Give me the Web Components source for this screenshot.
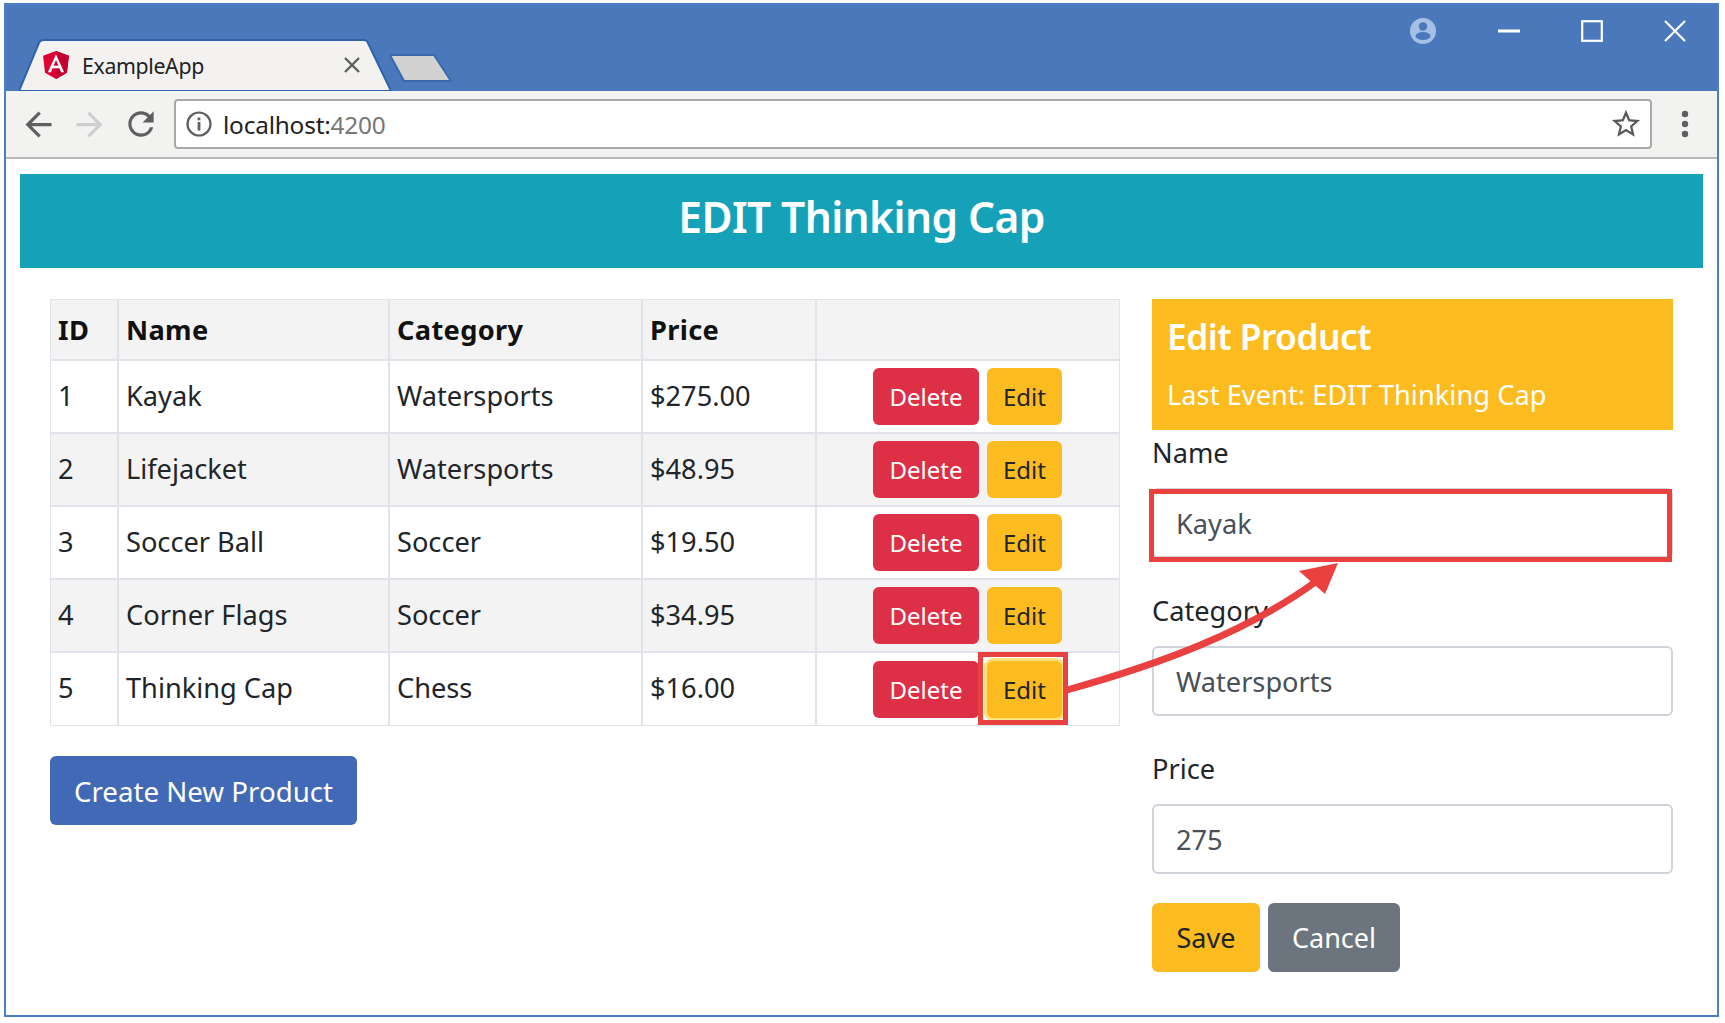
<!DOCTYPE html>
<html>
<head>
<meta charset="utf-8">
<title>ExampleApp</title>
<style>
    html, body { margin: 0; padding: 0; background: #fff; }
    body { padding: 3px 0 0 4px; font-family: "Noto Sans", "Open Sans", sans-serif; }
</style>
</head>
<body>
<x-window>
    <x-titlebar slot="chrome"></x-titlebar>
    <x-toolbar slot="chrome"></x-toolbar>
    <x-banner>EDIT Thinking Cap</x-banner>
    <x-product-table slot="left"></x-product-table>
    <x-btn slot="left" kind="primary" size="lg" class="create">Create New Product</x-btn>
    <x-edit-panel slot="right"></x-edit-panel>
    <x-annotations slot="over"></x-annotations>
</x-window>

<script>
class Base extends HTMLElement {
    $style() { return ''; }
    $template() { return ''; }
    constructor() {
        super();
        this.$dom = this.attachShadow({mode: 'open'});
    }
    connectedCallback() {
        this.$dom.innerHTML = '<style>' + this.$style() + '</style>' + this.$template();
    }
}

class XWindow extends Base {
    $style() {
        return `
        :host { display: block; position: relative; width: 1711px; height: 1010px;
            border: 2px solid #4a7fc4; background: #fff; overflow: hidden; color: #212529; }
        .content { padding: 15px 14px 0 14px; }
        .cols { display: grid; grid-template-columns: 1070px 521px; column-gap: 32px;
            margin: 31px 0 0 30px; }
        .left { display: flex; flex-direction: column; align-items: flex-start; gap: 30px; }
        `;
    }
    $template() {
        return `
        <slot name="chrome"></slot>
        <div class="content">
            <slot></slot>
            <div class="cols">
                <div class="left"><slot name="left"></slot></div>
                <div><slot name="right"></slot></div>
            </div>
        </div>
        <slot name="over"></slot>`;
    }
}

class XTitlebar extends Base {
    $style() {
        return `
        :host { display: flex; justify-content: space-between; height: 86px; background: #4a78bb; }
        .tabs { display: flex; align-items: flex-end; padding-left: 13px; }
        .tab { position: relative; width: 372px; height: 52px; display: flex; align-items: center;
            font-size: 21.3px; color: #222; }
        .tab > svg.shape { position: absolute; left: 0; top: 0; }
        .tab > * { position: relative; }
        .fav { margin-left: 22px; }
        .tab span { margin-left: 11px; flex: 1; letter-spacing: -0.35px; }
        .x { margin-right: 30px; }
        .newtab { margin: 0 0 8px -3px; display: block; }
        .ctl { display: flex; height: 52px; margin-right: 1px; }
        .ctl div { width: 83px; display: flex; align-items: center; justify-content: center; }
        .ctl div:first-child { margin-right: 3px; }
        `;
    }
    $template() {
        return `
        <div class="tabs">
            <div class="tab">
                <svg class="shape" width="372" height="52" viewBox="0 0 372 52">
                    <path d="M0 52 L20 4 Q21 1 25 1 H345 Q348 1 349 4 L372 52 Z" fill="#f3f2f1" stroke="#2f62ad" stroke-width="2"/>
                </svg>
                <svg class="fav" width="30" height="30" viewBox="22 22 206 216">
                    <polygon points="125,30 31.9,63.2 46.1,186.3 125,230 203.9,186.3 218.1,63.2" fill="#DD0031"/>
                    <polygon points="125,30 125,230 203.9,186.3 218.1,63.2" fill="#C3002F"/>
                    <path fill="#fff" d="M125,52.1L66.8,182.6h21.7l11.7-29.2h49.4l11.7,29.2h21.7L125,52.1z M142,135.4H108l17-40.9L142,135.4z"/>
                </svg>
                <span>ExampleApp</span>
                <svg class="x" width="18" height="18" viewBox="0 0 18 18"><path d="M2 2 L16 16 M16 2 L2 16" stroke="#5f5f5f" stroke-width="2.4"/></svg>
            </div>
            <svg class="newtab" width="66" height="30" viewBox="0 0 66 30">
                <path d="M2 2 H46 L63 28 H16 Z" fill="#d2d2d2" stroke="#3a69b0" stroke-width="2" stroke-linejoin="round"/>
            </svg>
        </div>
        <div class="ctl">
            <div><svg width="28" height="28" viewBox="0 0 28 28">
                <circle cx="14" cy="14" r="13" fill="#a6c0e5"/>
                <circle cx="14" cy="9.5" r="4.2" fill="#4a78bb"/>
                <ellipse cx="14" cy="19" rx="7.5" ry="4" fill="#4a78bb"/>
            </svg></div>
            <div><svg width="22" height="4" viewBox="0 0 22 4"><rect width="22" height="3" y="0.5" fill="#fff"/></svg></div>
            <div><svg width="22" height="22" viewBox="0 0 22 22"><rect x="1.2" y="1.2" width="19.6" height="19.6" fill="none" stroke="#fff" stroke-width="2.2"/></svg></div>
            <div><svg width="22" height="22" viewBox="0 0 22 22"><path d="M1 1 L21 21 M21 1 L1 21" stroke="#fff" stroke-width="2.2"/></svg></div>
        </div>`;
    }
}

class XToolbar extends Base {
    $style() {
        return `
        :host { display: flex; align-items: center; height: 66px; padding-left: 7px; background: #f2f2f1;
            border-bottom: 2px solid #b9b9b9; box-sizing: content-box; }
        .nav { width: 51px; display: flex; justify-content: center; }
        .omni { flex: 1; height: 46px; margin-left: 8px; display: flex; align-items: center; background: #fff;
            border: 2px solid #a8a8a8; border-radius: 4px; font-size: 24.4px; }
        .omni .i { margin-left: 10px; }
        .omni .url { margin-left: 11px; flex: 1; color: #222; letter-spacing: -0.2px; }
        .omni .url span { color: #777; }
        .omni .star { margin-right: 7px; }
        .menu { width: 65px; display: flex; justify-content: center; }
        `;
    }
    $template() {
        return `
        <div class="nav"><svg width="39" height="39" viewBox="0 0 24 24" fill="#5f5f5f"><path d="M20 11H7.83l5.59-5.59L12 4l-8 8 8 8 1.41-1.41L7.83 13H20v-2z"/></svg></div>
        <div class="nav"><svg width="39" height="39" viewBox="0 0 24 24" fill="#cfcfcf"><path d="M4 11h12.17l-5.59-5.59L12 4l8 8-8 8-1.41-1.41L16.17 13H4v-2z"/></svg></div>
        <div class="nav"><svg width="38" height="38" viewBox="0 0 24 24" fill="#5f5f5f"><path d="M17.65 6.35A7.958 7.958 0 0 0 12 4c-4.42 0-7.99 3.58-7.99 8s3.57 8 7.99 8c3.73 0 6.84-2.55 7.73-6h-2.08A5.99 5.99 0 0 1 12 18c-3.31 0-6-2.69-6-6s2.69-6 6-6c1.66 0 3.14.69 4.22 1.78L13 11h7V4l-2.35 2.35z"/></svg></div>
        <div class="omni">
            <svg class="i" width="26" height="26" viewBox="0 0 26 26">
                <circle cx="13" cy="13" r="11.5" fill="none" stroke="#5f5f5f" stroke-width="2.2"/>
                <rect x="11.6" y="11" width="2.8" height="8.5" fill="#5f5f5f"/>
                <rect x="11.6" y="6.5" width="2.8" height="2.8" fill="#5f5f5f"/>
            </svg>
            <div class="url">localhost:<span>4200</span></div>
            <svg class="star" width="34" height="34" viewBox="0 0 24 24" fill="#5a5a5a"><path d="M22 9.24l-7.19-.62L12 2 9.19 8.63 2 9.24l5.46 4.73L5.82 21 12 17.27 18.18 21l-1.63-7.03L22 9.24zM12 15.4l-3.76 2.27 1-4.28-3.32-2.88 4.38-.38L12 6.1l1.71 4.04 4.38.38-3.32 2.88 1 4.28L12 15.4z"/></svg>
        </div>
        <div class="menu"><svg width="8" height="28" viewBox="0 0 8 28" fill="#5f5f5f">
            <circle cx="4" cy="4" r="3.2"/><circle cx="4" cy="14" r="3.2"/><circle cx="4" cy="24" r="3.2"/>
        </svg></div>`;
    }
}

class XBanner extends Base {
    $style() {
        return `
        :host { display: flex; align-items: center; justify-content: center; height: 94px; box-sizing: border-box;
            padding-bottom: 9px; background: #15a2b8; color: #fff; font-size: 42.5px; font-weight: 600; letter-spacing: -0.6px; }
        `;
    }
    $template() { return '<slot></slot>'; }
}

class XBtn extends Base {
    $style() {
        return `
        :host { display: inline-flex; align-items: center; justify-content: center; box-sizing: border-box;
            border-radius: 6px; height: 57px; padding: 0 16px; font-size: 24px; white-space: nowrap; }
        :host([size="lg"]) { height: 69px; padding: 0 23px; font-size: 27.7px; border-radius: 6px; }
        :host([kind="danger"]) { background: #dd3046; color: #fff; width: 106px; }
        :host([kind="warning"]) { background: #fcbc1f; color: #212529; width: 75px; }
        :host([kind="primary"]) { background: #4269b6; color: #fff; width: 307px; }
        :host([kind="save"]) { background: #fcbc1f; color: #212529; width: 108px; font-size: 27px; }
        :host([kind="secondary"]) { background: #6c757d; color: #fff; width: 132px; font-size: 27px; }
        :host([focus]) { box-shadow: 0 0 0 3px #ffe27d; }
        `;
    }
    $template() { return '<slot></slot>'; }
}

class XProductRow extends Base {
    $style() {
        return `
        :host { display: grid; grid-template-columns: 68px 271px 253px 174px 304px; height: 73px;
            box-sizing: border-box; font-size: 27.2px; }
        :host([striped]) { background: #f4f3f3; }
        :host([last]) { height: 74px; }
        :host([head]) { height: 61px; background: #f4f3f3; font-weight: 700; color: #111; letter-spacing: 0.35px; }
        :host([head]) .c { padding-bottom: 1px; }
        .c { display: flex; align-items: center; box-sizing: border-box; padding-left: 7px;
            border: 1px solid #e1e3ea; padding-bottom: 3px; white-space: nowrap; }
        .btns { justify-content: center; gap: 8px; padding: 0 1px 0 0; }
        `;
    }
    $template() {
        const g = n => this.getAttribute(n) || '';
        if (this.hasAttribute('head')) {
            return `<div class="c">ID</div><div class="c">Name</div><div class="c">Category</div><div class="c">Price</div><div class="c"></div>`;
        }
        const focus = this.hasAttribute('focus-edit') ? 'focus' : '';
        return `<div class="c">${g('pid')}</div><div class="c">${g('name')}</div><div class="c">${g('category')}</div><div class="c">${g('price')}</div>
        <div class="c btns"><x-btn kind="danger">Delete</x-btn><x-btn kind="warning" ${focus}>Edit</x-btn></div>`;
    }
}

class XProductTable extends Base {
    $style() {
        return `:host { display: block; width: 1070px; }`;
    }
    $template() {
        const rows = [
            [1, 'Kayak', 'Watersports', '$275.00'],
            [2, 'Lifejacket', 'Watersports', '$48.95'],
            [3, 'Soccer Ball', 'Soccer', '$19.50'],
            [4, 'Corner Flags', 'Soccer', '$34.95'],
            [5, 'Thinking Cap', 'Chess', '$16.00']
        ];
        return `<x-product-row head></x-product-row>` + rows.map((r, i) =>
            `<x-product-row pid="${r[0]}" name="${r[1]}" category="${r[2]}" price="${r[3]}"
                ${i % 2 ? 'striped' : ''} ${i === 4 ? 'focus-edit last' : ''}></x-product-row>`).join('');
    }
}

class XField extends Base {
    $style() {
        return `
        :host { display: block; font-size: 27.2px; margin-bottom: 31px; }
        label { display: flex; align-items: center; height: 43px; margin-bottom: 14px; padding-bottom: 1px; box-sizing: border-box; }
        .input { box-sizing: border-box; height: 70px; padding: 0 22px; display: flex; align-items: center;
            border: 2px solid #ced4da; border-radius: 6px; color: #495057; }
        `;
    }
    $template() {
        return `<label>${this.getAttribute('label')}</label><div class="input"><slot></slot></div>`;
    }
}

class XEditPanel extends Base {
    $style() {
        return `
        :host { display: block; width: 521px; }
        .head { box-sizing: border-box; height: 131px; padding: 12px 15px 0; background: #fcbc1f; color: #fff; }
        .t { font-size: 35.3px; font-weight: 600; line-height: 50px; letter-spacing: -0.5px; }
        .s { font-size: 27.2px; line-height: 42px; margin-top: 13px; letter-spacing: 0.05px; white-space: nowrap; }
        .fields { padding-top: 1px; }
        .actions { display: flex; gap: 8px; margin-top: -2px; }
        `;
    }
    $template() {
        return `
        <div class="head">
            <div class="t">Edit Product</div>
            <div class="s">Last Event: EDIT Thinking Cap</div>
        </div>
        <div class="fields">
            <x-field label="Name">Kayak</x-field>
            <x-field label="Category">Watersports</x-field>
            <x-field label="Price">275</x-field>
        </div>
        <div class="actions">
            <x-btn kind="save" size="lg" style="width:108px">Save</x-btn>
            <x-btn kind="secondary" size="lg" style="width:132px">Cancel</x-btn>
        </div>`;
    }
}

// red markup drawn over the page, coordinates are page coordinates
class XAnnotations extends Base {
    $style() {
        return `
        :host { position: absolute; left: 0; top: 0; width: 100%; height: 100%; pointer-events: none; }
        `;
    }
    $template() {
        return `
        <svg width="1711" height="1010" viewBox="6 5 1711 1010" style="display:block">
            <rect x="980.5" y="654.5" width="85" height="68" fill="none" stroke="#ea4040" stroke-width="5"/>
            <rect x="1151.5" y="491.5" width="518" height="68" fill="none" stroke="#ea4040" stroke-width="5"/>
            <path d="M1067 690 C1160 664 1248 632 1318 580" fill="none" stroke="#ea4040" stroke-width="7"/>
            <polygon points="1338,563 1299,571 1325,594" fill="#ea4040"/>
        </svg>`;
    }
}

customElements.define('x-window', XWindow);
customElements.define('x-titlebar', XTitlebar);
customElements.define('x-toolbar', XToolbar);
customElements.define('x-banner', XBanner);
customElements.define('x-btn', XBtn);
customElements.define('x-product-row', XProductRow);
customElements.define('x-product-table', XProductTable);
customElements.define('x-field', XField);
customElements.define('x-edit-panel', XEditPanel);
customElements.define('x-annotations', XAnnotations);
</script>
</body>
</html>
